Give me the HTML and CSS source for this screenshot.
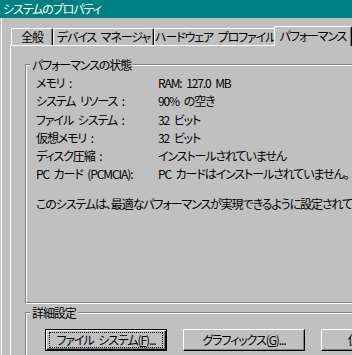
FILE: index.html
```html
<!DOCTYPE html>
<html lang="ja">
    <head>
        <meta charset="UTF-8">
        <meta name="viewport" content="width=device-width, initial-scale=1.0">
        <title>システムのプロパティ</title>
        <link rel="stylesheet" href="styles.css">
    </head>
    <body>
        <div class="dialog">
            <!-- Title bar -->
            <div class="titlebar">システムのプロパティ</div>

            <div class="client">
                <!-- Tabs -->
                <div class="tabs">
                    <div class="tab tab-general">全般</div>
                    <div class="tab tab-devices">デバイス マネージャ</div>
                    <div class="tab tab-hardware">ハードウェア プロファイル</div>
                    <div class="tab tab-active">パフォーマンス</div>
                </div>

                <!-- Performance page -->
                <div class="panel">
                    <div class="group group-status">
                        <span class="group-title">パフォーマンスの状態</span>

                        <div class="row">
                            <span class="label">メモリ :</span>
                            <span class="value">RAM: 127.0 MB</span>
                        </div>
                        <div class="row">
                            <span class="label">システム リソース :</span>
                            <span class="value">90% の空き</span>
                        </div>
                        <div class="row">
                            <span class="label">ファイル システム :</span>
                            <span class="value">32 ビット</span>
                        </div>
                        <div class="row">
                            <span class="label">仮想メモリ :</span>
                            <span class="value">32 ビット</span>
                        </div>
                        <div class="row">
                            <span class="label">ディスク圧縮 :</span>
                            <span class="value">インストールされていません</span>
                        </div>
                        <div class="row">
                            <span class="label">PC カード (PCMCIA):</span>
                            <span class="value">PC カードはインストールされていません。</span>
                        </div>

                        <p class="message">このシステムは、最適なパフォーマンスが実現できるように設定されています。</p>
                    </div>

                    <div class="group group-advanced">
                        <span class="group-title">詳細設定</span>

                        <div class="buttons">
                            <div class="button button-default">
                                <span class="focus">ファイル システム(<u>F</u>)...</span>
                            </div>
                            <div class="button">
                                <span class="caption">グラフィックス(<u>G</u>)...</span>
                            </div>
                            <div class="button">
                                <span class="caption">仮想メモリ(<u>V</u>)...</span>
                            </div>
                        </div>
                    </div>
                </div>
            </div>
        </div>
    </body>
</html>
```

FILE: styles.css
```css
body {
    margin: 0;
    background-color: #c0c0c0;
    font-family: "Noto Sans CJK JP", "Liberation Sans", sans-serif;
    font-size: 12px;
    font-feature-settings: "palt";
    letter-spacing: -1.1px;
    word-spacing: 3px;
    color: #000;
}

.dialog {
    width: 352px;
    height: 355px;
    overflow: hidden;
    background-color: #c0c0c0;
}

.titlebar {
    height: 18px;
    line-height: 18px;
    padding-left: 3px;
    background-color: #008080;
    color: #fff;
    white-space: nowrap;
}

.client {
    height: 337px;
    margin-left: 1px;
    border-left: 1px solid #fff;
    padding-top: 8px;
}

/* Tabs */
.tabs {
    display: flex;
    align-items: flex-end;
    height: 19px;
    margin-left: 9px;
    position: relative;
    z-index: 1;
}

.tab {
    flex-shrink: 0;
    box-sizing: border-box;
    height: 17px;
    line-height: 15px;
    text-align: center;
    white-space: nowrap;
    border-top: 1px solid #fff;
    border-left: 1px solid #fff;
    border-right: 1px solid #000;
    border-radius: 2px 2px 0 0;
    box-shadow: inset -1px 0 0 #808080;
}

.tab-general {
    width: 42px;
}

.tab-devices {
    width: 101px;
}

.tab-hardware {
    width: 122px;
}

.tab-active {
    width: 78px;
    height: 20px;
    margin-left: -2px;
    margin-bottom: -1px;
    line-height: 17px;
    background-color: #c0c0c0;
}

.panel {
    margin-left: 8px;
    width: 400px;
    height: 320px;
    border-top: 1px solid #fff;
    border-left: 1px solid #fff;
    padding-left: 14px;
    padding-top: 18px;
}

/* Group boxes */
.group {
    position: relative;
    box-sizing: border-box;
    width: 380px;
    border: 1px solid #808080;
    box-shadow: inset 1px 1px 0 #fff, 1px 1px 0 #fff;
}

.group-title {
    position: absolute;
    top: -8px;
    left: 4px;
    padding: 0 2px;
    line-height: 16px;
    background-color: #c0c0c0;
    white-space: nowrap;
}

.group-status {
    height: 239px;
    padding: 9px 0 0 10px;
}

.group-advanced {
    height: 60px;
    margin-top: 9px;
    padding: 16px 0 0 19px;
}

.row {
    display: flex;
    line-height: 18.3px;
    white-space: nowrap;
}

.label {
    flex-shrink: 0;
    width: 122px;
}

.message {
    margin: 11px 0 0;
    line-height: 18px;
    white-space: nowrap;
}

/* Buttons */
.buttons {
    display: flex;
    gap: 16px;
}

.button {
    flex-shrink: 0;
    box-sizing: border-box;
    width: 122px;
    height: 22px;
    display: flex;
    align-items: center;
    justify-content: center;
    border-top: 1px solid #fff;
    border-left: 1px solid #fff;
    border-right: 1px solid #000;
    border-bottom: 1px solid #000;
    box-shadow: inset -1px -1px 0 #808080;
    white-space: nowrap;
}

.button-default {
    border: 1px solid #000;
    box-shadow: inset 1px 1px 0 #fff, inset -1px -1px 0 #000, inset -2px -2px 0 #808080;
    padding: 0 3px;
}

.focus {
    flex: 1;
    text-align: center;
    line-height: 14px;
    border: 1px dotted #000;
}

.caption {
    line-height: 14px;
}
```
